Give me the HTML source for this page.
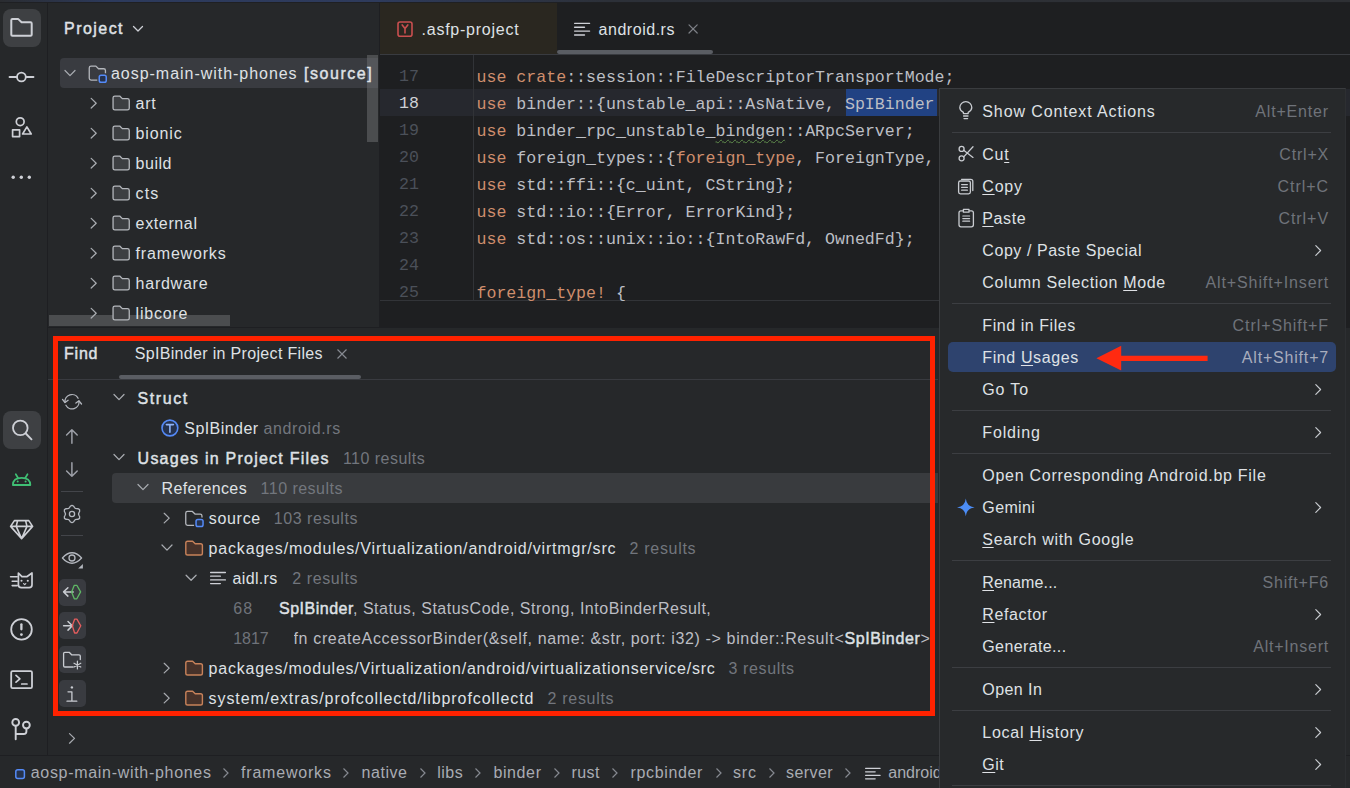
<!DOCTYPE html>
<html><head><meta charset="utf-8"><style>
html,body{margin:0;padding:0;width:1350px;height:788px;overflow:hidden;background:#26282A}
body{position:relative;font-family:'Liberation Sans', sans-serif}
b{font-weight:400;color:#DFE1E5;-webkit-text-stroke:0.45px #DFE1E5}
u{text-decoration-thickness:1px}
</style></head><body><div style="position:absolute;left:0px;top:0px;width:1350px;height:788px;background:#26282A;"></div><div style="position:absolute;left:0px;top:0px;width:1350px;height:2px;background:linear-gradient(90deg,#2a2c30 0%,#2c3a5c 8%,#2e3b5c 28%,#2c3038 45%,#2e3034 100%);"></div><div style="position:absolute;left:0px;top:2px;width:1350px;height:1px;background:#1f2023;"></div><div style="position:absolute;left:47px;top:3px;width:1px;height:752px;background:#1E1F22;"></div><div style="position:absolute;left:380px;top:3px;width:970px;height:324px;background:#1E1F21;"></div><div style="position:absolute;left:379px;top:3px;width:1px;height:324px;background:#1E1F22;"></div><div style="position:absolute;left:48px;top:327px;width:1302px;height:1px;background:#1E1F22;"></div><div style="position:absolute;left:0px;top:755px;width:1350px;height:1px;background:#1E1F22;"></div><div style="position:absolute;left:3px;top:9px;width:38px;height:38px;background:#3E4043;border-radius:8px"></div><div style="position:absolute;left:3px;top:411px;width:38px;height:38px;background:#3E4043;border-radius:8px"></div><svg style="position:absolute;left:132px;top:25px;" width="12" height="8" viewBox="0 0 12 8" fill="none"><path d="M1.5 1.5 L6 6 L10.5 1.5" stroke="#CED0D6" stroke-width="1.3" stroke-linecap="round" stroke-linejoin="round"/></svg><div style="position:absolute;left:60px;top:58px;width:318px;height:30px;background:#393B40;border-radius:4px 0 0 4px"></div><div style="position:absolute;left:367px;top:55px;width:11px;height:87px;background:rgba(112,114,116,0.5);"></div><div style="position:absolute;left:49px;top:315px;width:181px;height:11px;background:rgba(112,114,116,0.5);"></div><div style="position:absolute;left:380px;top:54px;width:970px;height:1px;background:#393B40;"></div><div style="position:absolute;left:380px;top:3px;width:177px;height:51px;background:#2A2720;"></div><div style="position:absolute;left:557px;top:50px;width:156px;height:4px;background:#5A5D63;border-radius:2px"></div><div style="position:absolute;left:380px;top:89px;width:970px;height:27px;background:#26282E;"></div><div style="position:absolute;left:473px;top:55px;width:1px;height:245px;background:#313337;"></div><div style="position:absolute;left:845.5px;top:89px;width:91px;height:27px;background:#214283;"></div><div style="position:absolute;left:380px;top:300px;width:560px;height:1px;background:#323438;"></div><div style="position:absolute;left:399px;top:62.8px;font-family:'Liberation Mono', monospace;font-size:16.6px;line-height:27px;color:#4B5059;white-space:pre">17</div><div style="position:absolute;left:399px;top:89.8px;font-family:'Liberation Mono', monospace;font-size:16.6px;line-height:27px;color:#CFD1D6;white-space:pre">18</div><div style="position:absolute;left:399px;top:116.8px;font-family:'Liberation Mono', monospace;font-size:16.6px;line-height:27px;color:#4B5059;white-space:pre">19</div><div style="position:absolute;left:399px;top:143.8px;font-family:'Liberation Mono', monospace;font-size:16.6px;line-height:27px;color:#4B5059;white-space:pre">20</div><div style="position:absolute;left:399px;top:170.8px;font-family:'Liberation Mono', monospace;font-size:16.6px;line-height:27px;color:#4B5059;white-space:pre">21</div><div style="position:absolute;left:399px;top:197.8px;font-family:'Liberation Mono', monospace;font-size:16.6px;line-height:27px;color:#4B5059;white-space:pre">22</div><div style="position:absolute;left:399px;top:224.8px;font-family:'Liberation Mono', monospace;font-size:16.6px;line-height:27px;color:#4B5059;white-space:pre">23</div><div style="position:absolute;left:399px;top:251.8px;font-family:'Liberation Mono', monospace;font-size:16.6px;line-height:27px;color:#4B5059;white-space:pre">24</div><div style="position:absolute;left:399px;top:278.8px;font-family:'Liberation Mono', monospace;font-size:16.6px;line-height:27px;color:#4B5059;white-space:pre">25</div><div style="position:absolute;left:476.5px;top:63.6px;width:870px;height:239px;overflow:hidden;font-family:'Liberation Mono', monospace;font-size:16.6px;line-height:27px;color:#BCBEC4;white-space:pre"><span style="color:#CF8E6D">use</span> <span style="color:#CF8E6D">crate</span>::session::FileDescriptorTransportMode;<br><span style="color:#CF8E6D">use</span> binder::{unstable_api::AsNative, SpIBinder<br><span style="color:#CF8E6D">use</span> binder_rpc_unstable_<span style="text-decoration:underline wavy #5F8B4B;text-decoration-thickness:1px;text-underline-offset:3px;text-decoration-skip-ink:none">bindgen</span>::ARpcServer;<br><span style="color:#CF8E6D">use</span> foreign_types::{<span style="color:#CF8E6D">foreign_type</span>, ForeignType, ForeignTypeRef};<br><span style="color:#CF8E6D">use</span> std::ffi::{c_uint, CString};<br><span style="color:#CF8E6D">use</span> std::io::{Error, ErrorKind};<br><span style="color:#CF8E6D">use</span> std::os::unix::io::{IntoRawFd, OwnedFd};<br><br><span style="color:#CF8E6D">foreign_type!</span> {</div><svg style="position:absolute;left:336px;top:348px;" width="12" height="12" viewBox="0 0 12 12" fill="none"><path d="M1.5 1.5 L10.5 10.5 M10.5 1.5 L1.5 10.5" stroke="#868A91" stroke-width="1.2"/></svg><div style="position:absolute;left:119px;top:375px;width:242px;height:4px;background:#5A5D63;border-radius:2px"></div><div style="position:absolute;left:48px;top:378.5px;width:890px;height:1px;background:#393B40;"></div><div style="position:absolute;left:112px;top:472.6px;width:826px;height:30px;background:#393B3E;border-radius:4px 0 0 4px"></div><div style="position:absolute;left:59px;top:578.5px;width:27px;height:27px;background:#393B40;border-radius:5px"></div><div style="position:absolute;left:59px;top:612px;width:27px;height:27px;background:#393B40;border-radius:5px"></div><div style="position:absolute;left:59px;top:646px;width:27px;height:27px;background:#393B40;border-radius:5px"></div><div style="position:absolute;left:59px;top:680px;width:27px;height:27px;background:#393B40;border-radius:5px"></div><div style="position:absolute;left:61px;top:491px;width:22px;height:1px;background:#43454A;"></div><div style="position:absolute;left:61px;top:535px;width:22px;height:1px;background:#43454A;"></div><div style="position:absolute;left:53px;top:336px;width:871.5px;height:369.5px;border:5.5px solid #FF2200"></div><svg style="position:absolute;left:222px;top:767px;" width="8" height="12" viewBox="0 0 8 12" fill="none"><path d="M1.5 1.5 L6 6 L1.5 10.5" stroke="#868A91" stroke-width="1.2" fill="none"/></svg><svg style="position:absolute;left:342px;top:767px;" width="8" height="12" viewBox="0 0 8 12" fill="none"><path d="M1.5 1.5 L6 6 L1.5 10.5" stroke="#868A91" stroke-width="1.2" fill="none"/></svg><svg style="position:absolute;left:418.6px;top:767px;" width="8" height="12" viewBox="0 0 8 12" fill="none"><path d="M1.5 1.5 L6 6 L1.5 10.5" stroke="#868A91" stroke-width="1.2" fill="none"/></svg><svg style="position:absolute;left:473.7px;top:767px;" width="8" height="12" viewBox="0 0 8 12" fill="none"><path d="M1.5 1.5 L6 6 L1.5 10.5" stroke="#868A91" stroke-width="1.2" fill="none"/></svg><svg style="position:absolute;left:552.6px;top:767px;" width="8" height="12" viewBox="0 0 8 12" fill="none"><path d="M1.5 1.5 L6 6 L1.5 10.5" stroke="#868A91" stroke-width="1.2" fill="none"/></svg><svg style="position:absolute;left:611.4px;top:767px;" width="8" height="12" viewBox="0 0 8 12" fill="none"><path d="M1.5 1.5 L6 6 L1.5 10.5" stroke="#868A91" stroke-width="1.2" fill="none"/></svg><svg style="position:absolute;left:715px;top:767px;" width="8" height="12" viewBox="0 0 8 12" fill="none"><path d="M1.5 1.5 L6 6 L1.5 10.5" stroke="#868A91" stroke-width="1.2" fill="none"/></svg><svg style="position:absolute;left:767.5px;top:767px;" width="8" height="12" viewBox="0 0 8 12" fill="none"><path d="M1.5 1.5 L6 6 L1.5 10.5" stroke="#868A91" stroke-width="1.2" fill="none"/></svg><svg style="position:absolute;left:843.8px;top:767px;" width="8" height="12" viewBox="0 0 8 12" fill="none"><path d="M1.5 1.5 L6 6 L1.5 10.5" stroke="#868A91" stroke-width="1.2" fill="none"/></svg><div id="t0" style="position:absolute;left:64px;top:13.5px;font-family:'Liberation Sans', sans-serif;font-size:16px;font-weight:400;line-height:30px;color:#DFE1E5;white-space:pre;letter-spacing:1.458px;-webkit-text-stroke:0.45px #DFE1E5">Project</div><div id="t1" style="position:absolute;left:111px;top:58.5px;font-family:'Liberation Sans', sans-serif;font-size:16px;font-weight:400;line-height:30px;color:#DFE1E5;white-space:pre;letter-spacing:0.966px;">aosp-main-with-phones</div><div id="t2" style="position:absolute;left:304px;top:58.5px;font-family:'Liberation Sans', sans-serif;font-size:16px;font-weight:400;line-height:30px;color:#DFE1E5;white-space:pre;letter-spacing:1.535px;-webkit-text-stroke:0.45px #DFE1E5">[source]</div><div id="t3" style="position:absolute;left:135.6px;top:88.5px;font-family:'Liberation Sans', sans-serif;font-size:16px;font-weight:400;line-height:30px;color:#DFE1E5;white-space:pre;letter-spacing:0.776px;">art</div><div id="t4" style="position:absolute;left:135.6px;top:118.5px;font-family:'Liberation Sans', sans-serif;font-size:16px;font-weight:400;line-height:30px;color:#DFE1E5;white-space:pre;letter-spacing:0.865px;">bionic</div><div id="t5" style="position:absolute;left:135.6px;top:148.5px;font-family:'Liberation Sans', sans-serif;font-size:16px;font-weight:400;line-height:30px;color:#DFE1E5;white-space:pre;letter-spacing:0.517px;">build</div><div id="t6" style="position:absolute;left:135.6px;top:178.5px;font-family:'Liberation Sans', sans-serif;font-size:16px;font-weight:400;line-height:30px;color:#DFE1E5;white-space:pre;letter-spacing:1.049px;">cts</div><div id="t7" style="position:absolute;left:135.6px;top:208.5px;font-family:'Liberation Sans', sans-serif;font-size:16px;font-weight:400;line-height:30px;color:#DFE1E5;white-space:pre;letter-spacing:0.635px;">external</div><div id="t8" style="position:absolute;left:135.6px;top:238.5px;font-family:'Liberation Sans', sans-serif;font-size:16px;font-weight:400;line-height:30px;color:#DFE1E5;white-space:pre;letter-spacing:0.821px;">frameworks</div><div id="t9" style="position:absolute;left:135.6px;top:268.5px;font-family:'Liberation Sans', sans-serif;font-size:16px;font-weight:400;line-height:30px;color:#DFE1E5;white-space:pre;letter-spacing:0.750px;">hardware</div><div id="t10" style="position:absolute;left:135.6px;top:298.5px;font-family:'Liberation Sans', sans-serif;font-size:16px;font-weight:400;line-height:30px;color:#DFE1E5;white-space:pre;letter-spacing:0.794px;">libcore</div><div id="t11" style="position:absolute;left:421.5px;top:14.5px;font-family:'Liberation Sans', sans-serif;font-size:16px;font-weight:400;line-height:30px;color:#DFE1E5;white-space:pre;letter-spacing:0.766px;">.asfp-project</div><div id="t12" style="position:absolute;left:598.6px;top:14.5px;font-family:'Liberation Sans', sans-serif;font-size:16px;font-weight:400;line-height:30px;color:#DFE1E5;white-space:pre;letter-spacing:0.524px;">android.rs</div><div id="t13" style="position:absolute;left:64px;top:338.5px;font-family:'Liberation Sans', sans-serif;font-size:16px;font-weight:400;line-height:30px;color:#DFE1E5;white-space:pre;letter-spacing:0.794px;-webkit-text-stroke:0.45px #DFE1E5">Find</div><div id="t14" style="position:absolute;left:134.7px;top:338.5px;font-family:'Liberation Sans', sans-serif;font-size:16px;font-weight:400;line-height:30px;color:#DFE1E5;white-space:pre;letter-spacing:0.329px;">SpIBinder in Project Files</div><div id="t15" style="position:absolute;left:137.6px;top:384px;font-family:'Liberation Sans', sans-serif;font-size:16px;font-weight:400;line-height:30px;color:#DFE1E5;white-space:pre;letter-spacing:1.567px;-webkit-text-stroke:0.45px #DFE1E5">Struct</div><div id="t16" style="position:absolute;left:184.3px;top:414px;font-family:'Liberation Sans', sans-serif;font-size:16px;font-weight:400;line-height:30px;color:#DFE1E5;white-space:pre;letter-spacing:0.437px;">SpIBinder</div><div id="t17" style="position:absolute;left:263.6px;top:414px;font-family:'Liberation Sans', sans-serif;font-size:16px;font-weight:400;line-height:30px;color:#72767D;white-space:pre;letter-spacing:0.604px;">android.rs</div><div id="t18" style="position:absolute;left:137.6px;top:444px;font-family:'Liberation Sans', sans-serif;font-size:16px;font-weight:400;line-height:30px;color:#DFE1E5;white-space:pre;letter-spacing:1.238px;-webkit-text-stroke:0.45px #DFE1E5">Usages in Project Files</div><div id="t19" style="position:absolute;left:342.9px;top:444px;font-family:'Liberation Sans', sans-serif;font-size:16px;font-weight:400;line-height:30px;color:#72767D;white-space:pre;letter-spacing:0.475px;">110 results</div><div id="t20" style="position:absolute;left:161.6px;top:474px;font-family:'Liberation Sans', sans-serif;font-size:16px;font-weight:400;line-height:30px;color:#DFE1E5;white-space:pre;letter-spacing:0.357px;">References</div><div id="t21" style="position:absolute;left:260.6px;top:474px;font-family:'Liberation Sans', sans-serif;font-size:16px;font-weight:400;line-height:30px;color:#72767D;white-space:pre;letter-spacing:0.475px;">110 results</div><div id="t22" style="position:absolute;left:208.7px;top:504px;font-family:'Liberation Sans', sans-serif;font-size:16px;font-weight:400;line-height:30px;color:#DFE1E5;white-space:pre;letter-spacing:0.711px;">source</div><div id="t23" style="position:absolute;left:273.8px;top:504px;font-family:'Liberation Sans', sans-serif;font-size:16px;font-weight:400;line-height:30px;color:#72767D;white-space:pre;letter-spacing:0.539px;">103 results</div><div id="t24" style="position:absolute;left:208.6px;top:534px;font-family:'Liberation Sans', sans-serif;font-size:16px;font-weight:400;line-height:30px;color:#DFE1E5;white-space:pre;letter-spacing:0.818px;">packages/modules/Virtualization/android/virtmgr/src</div><div id="t25" style="position:absolute;left:629.6px;top:534px;font-family:'Liberation Sans', sans-serif;font-size:16px;font-weight:400;line-height:30px;color:#72767D;white-space:pre;letter-spacing:0.681px;">2 results</div><div id="t26" style="position:absolute;left:232.5px;top:564px;font-family:'Liberation Sans', sans-serif;font-size:16px;font-weight:400;line-height:30px;color:#DFE1E5;white-space:pre;letter-spacing:0.345px;">aidl.rs</div><div id="t27" style="position:absolute;left:292.3px;top:564px;font-family:'Liberation Sans', sans-serif;font-size:16px;font-weight:400;line-height:30px;color:#72767D;white-space:pre;letter-spacing:0.581px;">2 results</div><div id="t28" style="position:absolute;left:233.2px;top:594px;font-family:'Liberation Sans', sans-serif;font-size:16px;font-weight:400;line-height:30px;color:#6F737A;white-space:pre;letter-spacing:1.252px;">68</div><div id="t29" style="position:absolute;left:279px;top:594px;font-family:'Liberation Sans', sans-serif;font-size:16px;font-weight:400;line-height:30px;color:#BCBEC4;white-space:pre;letter-spacing:0.509px;"><b>SpIBinder</b>, Status, StatusCode, Strong, IntoBinderResult,</div><div id="t30" style="position:absolute;left:233.2px;top:624px;font-family:'Liberation Sans', sans-serif;font-size:16px;font-weight:400;line-height:30px;color:#6F737A;white-space:pre;letter-spacing:-0.023px;">1817</div><div id="t31" style="position:absolute;left:293.5px;top:624px;font-family:'Liberation Sans', sans-serif;font-size:16px;font-weight:400;line-height:30px;color:#BCBEC4;white-space:pre;letter-spacing:0.648px;width:636px;overflow:hidden">fn createAccessorBinder(&amp;self, name: &amp;str, port: i32) -&gt; binder::Result&lt;<b>SpIBinder</b>&gt;</div><div id="t32" style="position:absolute;left:208.6px;top:654px;font-family:'Liberation Sans', sans-serif;font-size:16px;font-weight:400;line-height:30px;color:#DFE1E5;white-space:pre;letter-spacing:0.772px;">packages/modules/Virtualization/android/virtualizationservice/src</div><div id="t33" style="position:absolute;left:728.5px;top:654px;font-family:'Liberation Sans', sans-serif;font-size:16px;font-weight:400;line-height:30px;color:#72767D;white-space:pre;letter-spacing:0.626px;">3 results</div><div id="t34" style="position:absolute;left:208.6px;top:684px;font-family:'Liberation Sans', sans-serif;font-size:16px;font-weight:400;line-height:30px;color:#DFE1E5;white-space:pre;letter-spacing:0.918px;">system/extras/profcollectd/libprofcollectd</div><div id="t35" style="position:absolute;left:547.6px;top:684px;font-family:'Liberation Sans', sans-serif;font-size:16px;font-weight:400;line-height:30px;color:#72767D;white-space:pre;letter-spacing:0.681px;">2 results</div><div id="t36" style="position:absolute;left:30.7px;top:757.75px;font-family:'Liberation Sans', sans-serif;font-size:16px;font-weight:400;line-height:30px;color:#A9ACB3;white-space:pre;letter-spacing:0.699px;">aosp-main-with-phones</div><div id="t37" style="position:absolute;left:241px;top:757.75px;font-family:'Liberation Sans', sans-serif;font-size:16px;font-weight:400;line-height:30px;color:#A9ACB3;white-space:pre;letter-spacing:0.801px;">frameworks</div><div id="t38" style="position:absolute;left:361.6px;top:757.75px;font-family:'Liberation Sans', sans-serif;font-size:16px;font-weight:400;line-height:30px;color:#A9ACB3;white-space:pre;letter-spacing:0.516px;">native</div><div id="t39" style="position:absolute;left:437.3px;top:757.75px;font-family:'Liberation Sans', sans-serif;font-size:16px;font-weight:400;line-height:30px;color:#A9ACB3;white-space:pre;letter-spacing:0.471px;">libs</div><div id="t40" style="position:absolute;left:493.4px;top:757.75px;font-family:'Liberation Sans', sans-serif;font-size:16px;font-weight:400;line-height:30px;color:#A9ACB3;white-space:pre;letter-spacing:0.619px;">binder</div><div id="t41" style="position:absolute;left:571.4px;top:757.75px;font-family:'Liberation Sans', sans-serif;font-size:16px;font-weight:400;line-height:30px;color:#A9ACB3;white-space:pre;letter-spacing:0.482px;">rust</div><div id="t42" style="position:absolute;left:630.6px;top:757.75px;font-family:'Liberation Sans', sans-serif;font-size:16px;font-weight:400;line-height:30px;color:#A9ACB3;white-space:pre;letter-spacing:0.633px;">rpcbinder</div><div id="t43" style="position:absolute;left:733px;top:757.75px;font-family:'Liberation Sans', sans-serif;font-size:16px;font-weight:400;line-height:30px;color:#A9ACB3;white-space:pre;letter-spacing:0.824px;">src</div><div id="t44" style="position:absolute;left:786px;top:757.75px;font-family:'Liberation Sans', sans-serif;font-size:16px;font-weight:400;line-height:30px;color:#A9ACB3;white-space:pre;letter-spacing:0.424px;">server</div><div id="t45" style="position:absolute;left:888.3px;top:757.75px;font-family:'Liberation Sans', sans-serif;font-size:16px;font-weight:400;line-height:30px;color:#A9ACB3;white-space:pre;letter-spacing:0.000px;">android.rs</div><div style="position:absolute;left:938.5px;top:87.5px;width:405px;height:720px;background:#27292B;border:1px solid #3A3C3F;border-right-color:#2D2F32;border-radius:0"></div><div style="position:absolute;left:951.5px;top:132.0px;width:379.5px;height:1px;background:#3C3E42;"></div><svg style="position:absolute;left:1313.5px;top:243.7px;" width="9" height="13" viewBox="0 0 9 13" fill="none"><path d="M1.8 1.6 L6.6 6.5 L1.8 11.4" stroke="#C9CCD1" stroke-width="1.15" fill="none" stroke-linecap="round" stroke-linejoin="round"/></svg><div style="position:absolute;left:951.5px;top:303.0px;width:379.5px;height:1px;background:#3C3E42;"></div><div style="position:absolute;left:948px;top:342.0px;width:387.5px;height:30px;background:#2E436E;border-radius:5px"></div><svg style="position:absolute;left:1313.5px;top:382.7px;" width="9" height="13" viewBox="0 0 9 13" fill="none"><path d="M1.8 1.6 L6.6 6.5 L1.8 11.4" stroke="#C9CCD1" stroke-width="1.15" fill="none" stroke-linecap="round" stroke-linejoin="round"/></svg><div style="position:absolute;left:951.5px;top:410.0px;width:379.5px;height:1px;background:#3C3E42;"></div><svg style="position:absolute;left:1313.5px;top:425.7px;" width="9" height="13" viewBox="0 0 9 13" fill="none"><path d="M1.8 1.6 L6.6 6.5 L1.8 11.4" stroke="#C9CCD1" stroke-width="1.15" fill="none" stroke-linecap="round" stroke-linejoin="round"/></svg><div style="position:absolute;left:951.5px;top:453.0px;width:379.5px;height:1px;background:#3C3E42;"></div><svg style="position:absolute;left:1313.5px;top:500.7px;" width="9" height="13" viewBox="0 0 9 13" fill="none"><path d="M1.8 1.6 L6.6 6.5 L1.8 11.4" stroke="#C9CCD1" stroke-width="1.15" fill="none" stroke-linecap="round" stroke-linejoin="round"/></svg><div style="position:absolute;left:951.5px;top:560.0px;width:379.5px;height:1px;background:#3C3E42;"></div><svg style="position:absolute;left:1313.5px;top:607.7px;" width="9" height="13" viewBox="0 0 9 13" fill="none"><path d="M1.8 1.6 L6.6 6.5 L1.8 11.4" stroke="#C9CCD1" stroke-width="1.15" fill="none" stroke-linecap="round" stroke-linejoin="round"/></svg><div style="position:absolute;left:951.5px;top:667.0px;width:379.5px;height:1px;background:#3C3E42;"></div><svg style="position:absolute;left:1313.5px;top:682.7px;" width="9" height="13" viewBox="0 0 9 13" fill="none"><path d="M1.8 1.6 L6.6 6.5 L1.8 11.4" stroke="#C9CCD1" stroke-width="1.15" fill="none" stroke-linecap="round" stroke-linejoin="round"/></svg><div style="position:absolute;left:951.5px;top:710.0px;width:379.5px;height:1px;background:#3C3E42;"></div><svg style="position:absolute;left:1313.5px;top:725.7px;" width="9" height="13" viewBox="0 0 9 13" fill="none"><path d="M1.8 1.6 L6.6 6.5 L1.8 11.4" stroke="#C9CCD1" stroke-width="1.15" fill="none" stroke-linecap="round" stroke-linejoin="round"/></svg><svg style="position:absolute;left:1313.5px;top:757.7px;" width="9" height="13" viewBox="0 0 9 13" fill="none"><path d="M1.8 1.6 L6.6 6.5 L1.8 11.4" stroke="#C9CCD1" stroke-width="1.15" fill="none" stroke-linecap="round" stroke-linejoin="round"/></svg><div style="position:absolute;left:951.5px;top:785.0px;width:379.5px;height:1px;background:#3C3E42;"></div><svg style="position:absolute;left:0;top:0" width="1350" height="788" viewBox="0 0 1350 788" fill="none"><path d="M11.3 20.2 Q11.3 19.1 12.4 19.1 L18.3 19.1 L21.6 22.3 L30.6 22.3 Q31.7 22.3 31.7 23.4 L31.7 34.7 Q31.7 35.8 30.6 35.8 L12.4 35.8 Q11.3 35.8 11.3 34.7 Z" stroke="#CED0D6" stroke-width="2" fill="none" stroke-linecap="round" stroke-linejoin="round" /><path d="M9.5 77 L16.8 77 M26 77 L33.5 77" stroke="#CED0D6" stroke-width="1.8" fill="none" stroke-linecap="round" stroke-linejoin="round" /><circle cx="21.4" cy="77" r="4.4" stroke="#CED0D6" stroke-width="1.8" fill="none"/><circle cx="20.2" cy="121.7" r="3.9" stroke="#CED0D6" stroke-width="1.7" fill="none"/><path d="M12.6 129.8 L19.6 129.8 L19.6 136.6 L12.6 136.6 Z" stroke="#CED0D6" stroke-width="1.7" fill="none" stroke-linecap="round" stroke-linejoin="round" /><path d="M26.9 126.9 L31.2 134 L22.6 134 Z" stroke="#CED0D6" stroke-width="1.7" fill="none" stroke-linecap="round" stroke-linejoin="round" /><circle cx="13.2" cy="177.3" r="1.7" fill="#CED0D6"/><circle cx="21.3" cy="177.3" r="1.7" fill="#CED0D6"/><circle cx="29.3" cy="177.3" r="1.7" fill="#CED0D6"/><circle cx="20.3" cy="427.9" r="7.3" stroke="#CED0D6" stroke-width="1.8" fill="none"/><path d="M25.8 433.5 L31.5 439.3" stroke="#CED0D6" stroke-width="1.9" fill="none" stroke-linecap="round" stroke-linejoin="round" /><path d="M12.9 485 Q12.9 477.8 21.7 477.8 Q30.3 477.8 30.3 485 Z" stroke="#3FBF74" stroke-width="1.8" fill="none" stroke-linecap="round" stroke-linejoin="round" /><path d="M15.8 474.2 L18.2 478.2 M27.5 474.2 L25.1 478.2" stroke="#3FBF74" stroke-width="1.7" fill="none" stroke-linecap="round" stroke-linejoin="round" /><circle cx="17.7" cy="481.6" r="1" fill="#3FBF74"/><circle cx="25.6" cy="481.6" r="1" fill="#3FBF74"/><path d="M14.4 520.6 L28.8 520.6 L32.6 526.4 L21.6 538.6 L10.6 526.4 Z M10.6 526.4 L32.6 526.4 M17.6 520.6 L16.2 526.4 L21.6 538.6 L27.0 526.4 L25.6 520.6" stroke="#CED0D6" stroke-width="1.6" fill="none" stroke-linecap="round" stroke-linejoin="round" /><path d="M18.4 584.8 L18.4 573 L21.9 576.7 L26.8 576.7 L32.0 573 L32.0 584.8 Q32.0 587.7 29.1 587.7 L21.3 587.7 Q18.4 587.7 18.4 584.8 Z" stroke="#CED0D6" stroke-width="1.7" fill="none" stroke-linecap="round" stroke-linejoin="round" /><path d="M10.6 576.7 L17.2 576.7 M12.2 581.2 L17.2 581.2 M12.2 585.6 L17.2 585.6" stroke="#CED0D6" stroke-width="1.6" fill="none" stroke-linecap="round" stroke-linejoin="round" /><circle cx="21.5" cy="580.8" r="1.05" fill="#CED0D6"/><circle cx="27.8" cy="580.8" r="1.05" fill="#CED0D6"/><path d="M23.6 583.6 L24.7 584.6 L25.8 583.6" stroke="#CED0D6" stroke-width="1.2" fill="none" stroke-linecap="round" stroke-linejoin="round" /><circle cx="21.5" cy="629.4" r="10.3" stroke="#CED0D6" stroke-width="1.8" fill="none"/><path d="M21.4 624.3 L21.4 629.3" stroke="#CED0D6" stroke-width="2.3" fill="none" stroke-linecap="round" stroke-linejoin="round" /><circle cx="21.4" cy="634.6" r="1.4" fill="#CED0D6"/><path d="M12.6 671.2 L30.6 671.2 Q32 671.2 32 672.6 L32 686.7 Q32 688.1 30.6 688.1 L12.6 688.1 Q11.2 688.1 11.2 686.7 L11.2 672.6 Q11.2 671.2 12.6 671.2 Z" stroke="#CED0D6" stroke-width="1.8" fill="none" stroke-linecap="round" stroke-linejoin="round" /><path d="M16 675.4 L19.9 678.8 L16 682.2 M21.7 684 L27 684" stroke="#CED0D6" stroke-width="1.7" fill="none" stroke-linecap="round" stroke-linejoin="round" /><circle cx="15.7" cy="722.4" r="3.4" stroke="#CED0D6" stroke-width="1.9" fill="none"/><circle cx="26.4" cy="725.1" r="3.4" stroke="#CED0D6" stroke-width="1.9" fill="none"/><path d="M15.7 725.9 L15.7 739.3 M26.4 728.6 L26.4 731.5 Q26.4 734 23.7 734 L15.9 734" stroke="#CED0D6" stroke-width="1.9" fill="none" stroke-linecap="round" stroke-linejoin="round" /></svg><svg style="position:absolute;left:0;top:0" width="1350" height="788" viewBox="0 0 1350 788" fill="none"><path d="M65 70.5 L70 75.6 L75 70.5" stroke="#A8ABB0" stroke-width="1.25" fill="none" stroke-linecap="round" stroke-linejoin="round" /><path d="M89.25 67.95 Q89.25 66.15 91.05 66.15 L95.9 66.15 L98.5 68.75 L103.64999999999999 68.75 Q105.44999999999999 68.75 105.44999999999999 70.55000000000001 L105.44999999999999 78.25 Q105.44999999999999 80.05 103.64999999999999 80.05 L91.05 80.05 Q89.25 80.05 89.25 78.25 Z" stroke="#B4B7BC" stroke-width="1.3" fill="none" stroke-linejoin="round"/><rect x="97.3" y="73.3" width="11" height="11" rx="3" fill="#393B3E"/><rect x="99.25" y="75.25" width="7" height="7" rx="1.8" stroke="#548AF7" stroke-width="1.5" fill="#25324D"/><path d="M91.2 98.4 L96.2 103.2 L91.2 108.0" stroke="#A8ABB0" stroke-width="1.25" fill="none" stroke-linecap="round" stroke-linejoin="round" /><path d="M113.05000000000001 97.85000000000001 Q113.05000000000001 96.05000000000001 114.85000000000001 96.05000000000001 L119.70000000000002 96.05000000000001 L122.30000000000001 98.65 L127.45 98.65 Q129.25 98.65 129.25 100.45000000000002 L129.25 108.15 Q129.25 109.95 127.45 109.95 L114.85000000000001 109.95 Q113.05000000000001 109.95 113.05000000000001 108.15 Z" stroke="#B4B7BC" stroke-width="1.3" fill="#3D3F42" stroke-linejoin="round"/><path d="M91.2 128.4 L96.2 133.20000000000002 L91.2 138.0" stroke="#A8ABB0" stroke-width="1.25" fill="none" stroke-linecap="round" stroke-linejoin="round" /><path d="M113.05000000000001 127.85000000000001 Q113.05000000000001 126.05000000000001 114.85000000000001 126.05000000000001 L119.70000000000002 126.05000000000001 L122.30000000000001 128.65 L127.45 128.65 Q129.25 128.65 129.25 130.45000000000002 L129.25 138.14999999999998 Q129.25 139.95 127.45 139.95 L114.85000000000001 139.95 Q113.05000000000001 139.95 113.05000000000001 138.14999999999998 Z" stroke="#B4B7BC" stroke-width="1.3" fill="#3D3F42" stroke-linejoin="round"/><path d="M91.2 158.4 L96.2 163.20000000000002 L91.2 168.0" stroke="#A8ABB0" stroke-width="1.25" fill="none" stroke-linecap="round" stroke-linejoin="round" /><path d="M113.05000000000001 157.85000000000002 Q113.05000000000001 156.05 114.85000000000001 156.05 L119.70000000000002 156.05 L122.30000000000001 158.65 L127.45 158.65 Q129.25 158.65 129.25 160.45000000000002 L129.25 168.14999999999998 Q129.25 169.95 127.45 169.95 L114.85000000000001 169.95 Q113.05000000000001 169.95 113.05000000000001 168.14999999999998 Z" stroke="#B4B7BC" stroke-width="1.3" fill="#3D3F42" stroke-linejoin="round"/><path d="M91.2 188.4 L96.2 193.20000000000002 L91.2 198.0" stroke="#A8ABB0" stroke-width="1.25" fill="none" stroke-linecap="round" stroke-linejoin="round" /><path d="M113.05000000000001 187.85000000000002 Q113.05000000000001 186.05 114.85000000000001 186.05 L119.70000000000002 186.05 L122.30000000000001 188.65 L127.45 188.65 Q129.25 188.65 129.25 190.45000000000002 L129.25 198.14999999999998 Q129.25 199.95 127.45 199.95 L114.85000000000001 199.95 Q113.05000000000001 199.95 113.05000000000001 198.14999999999998 Z" stroke="#B4B7BC" stroke-width="1.3" fill="#3D3F42" stroke-linejoin="round"/><path d="M91.2 218.4 L96.2 223.20000000000002 L91.2 228.0" stroke="#A8ABB0" stroke-width="1.25" fill="none" stroke-linecap="round" stroke-linejoin="round" /><path d="M113.05000000000001 217.85000000000002 Q113.05000000000001 216.05 114.85000000000001 216.05 L119.70000000000002 216.05 L122.30000000000001 218.65 L127.45 218.65 Q129.25 218.65 129.25 220.45000000000002 L129.25 228.14999999999998 Q129.25 229.95 127.45 229.95 L114.85000000000001 229.95 Q113.05000000000001 229.95 113.05000000000001 228.14999999999998 Z" stroke="#B4B7BC" stroke-width="1.3" fill="#3D3F42" stroke-linejoin="round"/><path d="M91.2 248.4 L96.2 253.20000000000002 L91.2 258.0" stroke="#A8ABB0" stroke-width="1.25" fill="none" stroke-linecap="round" stroke-linejoin="round" /><path d="M113.05000000000001 247.85000000000002 Q113.05000000000001 246.05 114.85000000000001 246.05 L119.70000000000002 246.05 L122.30000000000001 248.65 L127.45 248.65 Q129.25 248.65 129.25 250.45000000000002 L129.25 258.15000000000003 Q129.25 259.95000000000005 127.45 259.95000000000005 L114.85000000000001 259.95000000000005 Q113.05000000000001 259.95000000000005 113.05000000000001 258.15000000000003 Z" stroke="#B4B7BC" stroke-width="1.3" fill="#3D3F42" stroke-linejoin="round"/><path d="M91.2 278.4 L96.2 283.2 L91.2 288.0" stroke="#A8ABB0" stroke-width="1.25" fill="none" stroke-linecap="round" stroke-linejoin="round" /><path d="M113.05000000000001 277.84999999999997 Q113.05000000000001 276.04999999999995 114.85000000000001 276.04999999999995 L119.70000000000002 276.04999999999995 L122.30000000000001 278.65 L127.45 278.65 Q129.25 278.65 129.25 280.44999999999993 L129.25 288.15 Q129.25 289.95 127.45 289.95 L114.85000000000001 289.95 Q113.05000000000001 289.95 113.05000000000001 288.15 Z" stroke="#B4B7BC" stroke-width="1.3" fill="#3D3F42" stroke-linejoin="round"/><path d="M91.2 308.4 L96.2 313.2 L91.2 318.0" stroke="#A8ABB0" stroke-width="1.25" fill="none" stroke-linecap="round" stroke-linejoin="round" /><path d="M113.05000000000001 307.84999999999997 Q113.05000000000001 306.04999999999995 114.85000000000001 306.04999999999995 L119.70000000000002 306.04999999999995 L122.30000000000001 308.65 L127.45 308.65 Q129.25 308.65 129.25 310.44999999999993 L129.25 318.15 Q129.25 319.95 127.45 319.95 L114.85000000000001 319.95 Q113.05000000000001 319.95 113.05000000000001 318.15 Z" stroke="#B4B7BC" stroke-width="1.3" fill="#3D3F42" stroke-linejoin="round"/><rect x="398" y="22" width="14" height="14.2" rx="2" stroke="#C94F4F" stroke-width="1.6" fill="none"/><path d="M402.2 24.9 L405 28.6 L407.8 24.9 M405 28.6 L405 33" stroke="#C94F4F" stroke-width="1.6" fill="none" stroke-linecap="round" stroke-linejoin="round" /><path d="M574.6 23.3 L589.6 23.3 M574.6 27.2 L584.5 27.2 M574.6 31.1 L589.6 31.1 M574.6 35.0 L584.5 35.0" stroke="#CED0D6" stroke-width="1.35" fill="none" stroke-linecap="round" stroke-linejoin="round" /><path d="M689 24.8 L697.2 33 M697.2 24.8 L689 33" stroke="#7E8187" stroke-width="1.2" fill="none" stroke-linecap="round" stroke-linejoin="round" /><path d="M114 394.5 L119 399.6 L124 394.5" stroke="#A8ABB0" stroke-width="1.25" fill="none" stroke-linecap="round" stroke-linejoin="round" /><circle cx="169.9" cy="428" r="7.9" stroke="#548AF7" stroke-width="1.6" fill="#25324D"/><path d="M166.4 424.6 L173.4 424.6 M169.9 424.6 L169.9 432.3" stroke="#8FB3F7" stroke-width="1.6" fill="none" stroke-linecap="round" stroke-linejoin="round" /><path d="M114 454.5 L119 459.6 L124 454.5" stroke="#A8ABB0" stroke-width="1.25" fill="none" stroke-linecap="round" stroke-linejoin="round" /><path d="M138 484.5 L143 489.6 L148 484.5" stroke="#A8ABB0" stroke-width="1.25" fill="none" stroke-linecap="round" stroke-linejoin="round" /><path d="M164.2 513.3 L169.2 518.0999999999999 L164.2 522.9" stroke="#A8ABB0" stroke-width="1.25" fill="none" stroke-linecap="round" stroke-linejoin="round" /><path d="M185.75 513.25 Q185.75 511.45 187.55 511.45 L192.4 511.45 L195.0 514.05 L200.14999999999998 514.05 Q201.95 514.05 201.95 515.85 L201.95 523.5500000000001 Q201.95 525.35 200.14999999999998 525.35 L187.55 525.35 Q185.75 525.35 185.75 523.5500000000001 Z" stroke="#B4B7BC" stroke-width="1.3" fill="none" stroke-linejoin="round"/><rect x="194.10000000000002" y="517.5999999999999" width="11" height="11" rx="3" fill="#26282A"/><rect x="196.05" y="519.55" width="7" height="7" rx="1.8" stroke="#548AF7" stroke-width="1.5" fill="#25324D"/><path d="M162 545 L167 550.1 L172 545" stroke="#A8ABB0" stroke-width="1.25" fill="none" stroke-linecap="round" stroke-linejoin="round" /><path d="M185.79999999999998 543.0 Q185.79999999999998 541.2 187.6 541.2 L192.64 541.2 L195.23999999999998 543.8000000000001 L200.6 543.8000000000001 Q202.4 543.8000000000001 202.4 545.6 L202.4 553.2 Q202.4 555.0 200.6 555.0 L187.6 555.0 Q185.79999999999998 555.0 185.79999999999998 553.2 Z" stroke="#C7825A" stroke-width="1.4" fill="#46322A" stroke-linejoin="round"/><path d="M186.1 575.2 L191.1 580.3000000000001 L196.1 575.2" stroke="#A8ABB0" stroke-width="1.25" fill="none" stroke-linecap="round" stroke-linejoin="round" /><path d="M210.6 572.5 L225.4 572.5 M210.6 576.2 L220.368 576.2 M210.6 579.9 L225.4 579.9 M210.6 583.6 L220.368 583.6" stroke="#CED0D6" stroke-width="1.3" fill="none" stroke-linecap="round" stroke-linejoin="round" /><path d="M164.2 663.3 L169.2 668.0999999999999 L164.2 672.9" stroke="#A8ABB0" stroke-width="1.25" fill="none" stroke-linecap="round" stroke-linejoin="round" /><path d="M185.79999999999998 663.0 Q185.79999999999998 661.2 187.6 661.2 L192.64 661.2 L195.23999999999998 663.8000000000001 L200.6 663.8000000000001 Q202.4 663.8000000000001 202.4 665.6 L202.4 673.2 Q202.4 675.0 200.6 675.0 L187.6 675.0 Q185.79999999999998 675.0 185.79999999999998 673.2 Z" stroke="#C7825A" stroke-width="1.4" fill="#46322A" stroke-linejoin="round"/><path d="M164.2 693.3 L169.2 698.0999999999999 L164.2 702.9" stroke="#A8ABB0" stroke-width="1.25" fill="none" stroke-linecap="round" stroke-linejoin="round" /><path d="M185.79999999999998 693.0 Q185.79999999999998 691.2 187.6 691.2 L192.64 691.2 L195.23999999999998 693.8000000000001 L200.6 693.8000000000001 Q202.4 693.8000000000001 202.4 695.6 L202.4 703.2 Q202.4 705.0 200.6 705.0 L187.6 705.0 Q185.79999999999998 705.0 185.79999999999998 703.2 Z" stroke="#C7825A" stroke-width="1.4" fill="#46322A" stroke-linejoin="round"/><path d="M65.0 402.3 A7 7 0 0 1 78.1 398.2 M79.0 401.1 A7 7 0 0 1 65.9 405.2" stroke="#B4B8BF" stroke-width="1.3" fill="none" stroke-linecap="round" stroke-linejoin="round" /><path d="M62.5 399.4 L65.0 402.6 L68.1 400.3 M81.5 404.0 L79.0 400.8 L75.9 403.1" stroke="#B4B8BF" stroke-width="1.3" fill="none" stroke-linecap="round" stroke-linejoin="round" /><path d="M71.9 429.8 L71.9 443.2 M66.6 435 L71.9 429.8 L77.2 435" stroke="#9DA0A8" stroke-width="1.5" fill="none" stroke-linecap="round" stroke-linejoin="round" /><path d="M71.9 462.8 L71.9 476.2 M66.6 471 L71.9 476.2 L77.2 471" stroke="#9DA0A8" stroke-width="1.5" fill="none" stroke-linecap="round" stroke-linejoin="round" /><path d="M72.00 505.30 L73.42 505.97 L74.41 507.38 L75.25 508.37 L76.53 508.60 L78.24 508.76 L79.53 509.65 L79.66 511.21 L78.94 512.78 L78.50 514.00 L78.94 515.22 L79.66 516.79 L79.53 518.35 L78.24 519.24 L76.53 519.40 L75.25 519.63 L74.41 520.62 L73.42 522.03 L72.00 522.70 L70.58 522.03 L69.59 520.62 L68.75 519.63 L67.47 519.40 L65.76 519.24 L64.47 518.35 L64.34 516.79 L65.06 515.22 L65.50 514.00 L65.06 512.78 L64.34 511.21 L64.47 509.65 L65.76 508.76 L67.47 508.60 L68.75 508.37 L69.59 507.38 L70.58 505.97 Z" stroke="#B4B8BF" stroke-width="1.3" fill="none" stroke-linejoin="round"/><circle cx="72" cy="514" r="2.6" stroke="#B4B8BF" stroke-width="1.3" fill="none"/><path d="M62.4 558 Q72 547.5 81.6 558 Q72 568.5 62.4 558 Z" stroke="#B4B8BF" stroke-width="1.3" fill="none" stroke-linecap="round" stroke-linejoin="round" /><circle cx="72" cy="558" r="3" stroke="#B4B8BF" stroke-width="1.3" fill="none"/><path d="M82.9 564 L82.9 568.6 L78.2 568.6 Z" fill="#B4B8BF"/><path d="M63.6 591.9 L73.2 591.9 M67.9 587.7 L63.6 591.9 L67.9 596.1" stroke="#C9CCD1" stroke-width="1.5" fill="none" stroke-linecap="round" stroke-linejoin="round" /><path d="M71.6 591.9 L74.3 585.3 L76.8 585.3 L80.6 591.9 L76.8 598.8 L74.3 598.8 Z" stroke="#5FB865" stroke-width="1.3" fill="none" stroke-linecap="round" stroke-linejoin="round" /><path d="M63.6 625.8 L72.6 625.8 M68 621.5 L72.3 625.8 L68 630.1" stroke="#C9CCD1" stroke-width="1.5" fill="none" stroke-linecap="round" stroke-linejoin="round" /><path d="M72.3 625.8 L74.6 619.2 L76.9 619.2 L80.8 625.8 L76.9 633 L74.6 633 Z" stroke="#E55D5D" stroke-width="1.3" fill="none" stroke-linecap="round" stroke-linejoin="round" /><path d="M73 667 L64.8 667 Q63.6 667 63.6 665.8 L63.6 653.5 Q63.6 652.3 64.8 652.3 L69.2 652.3 L71.6 654.8 L79 654.8 Q80.3 654.8 80.3 656 L80.3 659.5" stroke="#C9CCD1" stroke-width="1.3" fill="none" stroke-linecap="round" stroke-linejoin="round" /><path d="M77.4 661.2 L77.4 669 M74 663.2 L80.8 667 M80.8 663.2 L74 667" stroke="#C9CCD1" stroke-width="1.2" fill="none" stroke-linecap="round" stroke-linejoin="round" /><circle cx="71.9" cy="687.4" r="1.2" fill="#C9CCD1"/><path d="M68 691.8 L71.9 691.8 L71.9 701 M67 701.2 L76.8 701.2" stroke="#C9CCD1" stroke-width="1.3" fill="none" stroke-linecap="round" stroke-linejoin="round" /><path d="M69.5 733.6 L74.5 738.4 L69.5 743.2" stroke="#A8ABB0" stroke-width="1.25" fill="none" stroke-linecap="round" stroke-linejoin="round" /></svg><svg style="position:absolute;left:0;top:0" width="1350" height="788" viewBox="0 0 1350 788" fill="none"><rect x="15.8" y="769.8" width="8.6" height="8.6" rx="2" stroke="#548AF7" stroke-width="1.5" fill="#25324D"/><path d="M865.6 768.3 L880.1 768.3 M865.6 771.8 L875.1700000000001 771.8 M865.6 775.3 L880.1 775.3 M865.6 778.8 L875.1700000000001 778.8" stroke="#CED0D6" stroke-width="1.3" fill="none" stroke-linecap="round" stroke-linejoin="round" /></svg><svg style="position:absolute;left:0;top:0" width="1350" height="788" viewBox="0 0 1350 788" fill="none"><path d="M963.4 113.6 L963.4 112.4 Q959.8 110.3 959.8 107.6 A6 6 0 0 1 971.8 107.6 Q971.8 110.3 968.2 112.4 L968.2 113.6 Z" stroke="#C9CCD1" stroke-width="1.3" fill="none" stroke-linecap="round" stroke-linejoin="round" /><path d="M963.6 116 L968 116 M964 118.6 L967.6 118.6" stroke="#C9CCD1" stroke-width="1.3" fill="none" stroke-linecap="round" stroke-linejoin="round" /><circle cx="961.6" cy="148.9" r="2.5" stroke="#C9CCD1" stroke-width="1.3" fill="none"/><circle cx="961.6" cy="158.3" r="2.5" stroke="#C9CCD1" stroke-width="1.3" fill="none"/><path d="M963.7 150.3 L973 157.4 M963.7 156.9 L973 146.8" stroke="#C9CCD1" stroke-width="1.3" fill="none" stroke-linecap="round" stroke-linejoin="round" /><path d="M961.5 179.3 L970.8 179.3 Q972.8 179.3 972.8 181.3 L972.8 190.5" stroke="#C9CCD1" stroke-width="1.3" fill="none" stroke-linecap="round" stroke-linejoin="round" /><path d="M960.4 181 L968.6 181 Q970.4 181 970.4 182.8 L970.4 192 Q970.4 193.8 968.6 193.8 L960.4 193.8 Q958.6 193.8 958.6 192 L958.6 182.8 Q958.6 181 960.4 181 Z" stroke="#C9CCD1" stroke-width="1.3" fill="none" stroke-linecap="round" stroke-linejoin="round" /><path d="M961.6 184.6 L967.4 184.6 M961.6 187.4 L967.4 187.4 M961.6 190.2 L967.4 190.2" stroke="#C9CCD1" stroke-width="1.2" fill="none" stroke-linecap="round" stroke-linejoin="round" /><path d="M962.9 210.8 L961 210.8 Q959 210.8 959 212.8 L959 224.8 Q959 226.8 961 226.8 L971.4 226.8 Q973.4 226.8 973.4 224.8 L973.4 212.8 Q973.4 210.8 971.4 210.8 L969.5 210.8" stroke="#C9CCD1" stroke-width="1.3" fill="none" stroke-linecap="round" stroke-linejoin="round" /><path d="M963.4 209.4 L969 209.4 L969 212.2 L963.4 212.2 Z" stroke="#C9CCD1" stroke-width="1.3" fill="none" stroke-linecap="round" stroke-linejoin="round" /><path d="M962.8 216 L969.6 216 M962.8 218.6 L969.6 218.6 M962.8 221.2 L969.6 221.2" stroke="#C9CCD1" stroke-width="1.2" fill="none" stroke-linecap="round" stroke-linejoin="round" /><path d="M965.8 498.6 Q966.6 506.6 974.6 507.4 Q966.6 508.2 965.8 516.2 Q965 508.2 957 507.4 Q965 506.6 965.8 498.6 Z" fill="#4C8DF6"/><path d="M1096.4 358.3 L1121.2 345.8 L1121.2 355.8 L1207.6 355.8 L1207.6 361 L1121.2 361 L1121.2 370.6 Z" fill="#FF2A10"/></svg><div id="t46" style="position:absolute;left:982.3px;top:96.5px;font-family:'Liberation Sans', sans-serif;font-size:16px;font-weight:400;line-height:30px;color:#DFE1E5;white-space:pre;letter-spacing:0.888px;">Show Context Actions</div><div id="t47" style="position:absolute;left:1255.3px;top:96.5px;font-family:'Liberation Sans', sans-serif;font-size:16px;font-weight:400;line-height:30px;color:#6F737A;white-space:pre;letter-spacing:0.826px;">Alt+Enter</div><div id="t48" style="position:absolute;left:982.3px;top:139.5px;font-family:'Liberation Sans', sans-serif;font-size:16px;font-weight:400;line-height:30px;color:#DFE1E5;white-space:pre;letter-spacing:0.698px;">Cu<u style="text-underline-offset:2px">t</u></div><div id="t49" style="position:absolute;left:1279.3px;top:139.5px;font-family:'Liberation Sans', sans-serif;font-size:16px;font-weight:400;line-height:30px;color:#6F737A;white-space:pre;letter-spacing:0.799px;">Ctrl+X</div><div id="t50" style="position:absolute;left:982.3px;top:171.5px;font-family:'Liberation Sans', sans-serif;font-size:16px;font-weight:400;line-height:30px;color:#DFE1E5;white-space:pre;letter-spacing:0.785px;"><u style="text-underline-offset:2px">C</u>opy</div><div id="t51" style="position:absolute;left:1277.5px;top:171.5px;font-family:'Liberation Sans', sans-serif;font-size:16px;font-weight:400;line-height:30px;color:#6F737A;white-space:pre;letter-spacing:0.953px;">Ctrl+C</div><div id="t52" style="position:absolute;left:982.3px;top:203.5px;font-family:'Liberation Sans', sans-serif;font-size:16px;font-weight:400;line-height:30px;color:#DFE1E5;white-space:pre;letter-spacing:0.616px;"><u style="text-underline-offset:2px">P</u>aste</div><div id="t53" style="position:absolute;left:1278.5px;top:203.5px;font-family:'Liberation Sans', sans-serif;font-size:16px;font-weight:400;line-height:30px;color:#6F737A;white-space:pre;letter-spacing:0.932px;">Ctrl+V</div><div id="t54" style="position:absolute;left:982.3px;top:235.5px;font-family:'Liberation Sans', sans-serif;font-size:16px;font-weight:400;line-height:30px;color:#DFE1E5;white-space:pre;letter-spacing:0.563px;">Copy / Paste Special</div><div id="t55" style="position:absolute;left:982.3px;top:267.5px;font-family:'Liberation Sans', sans-serif;font-size:16px;font-weight:400;line-height:30px;color:#DFE1E5;white-space:pre;letter-spacing:0.649px;">Column Selection <u style="text-underline-offset:2px">M</u>ode</div><div id="t56" style="position:absolute;left:1205.5px;top:267.5px;font-family:'Liberation Sans', sans-serif;font-size:16px;font-weight:400;line-height:30px;color:#6F737A;white-space:pre;letter-spacing:0.882px;">Alt+Shift+Insert</div><div id="t57" style="position:absolute;left:982.3px;top:310.5px;font-family:'Liberation Sans', sans-serif;font-size:16px;font-weight:400;line-height:30px;color:#DFE1E5;white-space:pre;letter-spacing:0.558px;">Find in Files</div><div id="t58" style="position:absolute;left:1232.6px;top:310.5px;font-family:'Liberation Sans', sans-serif;font-size:16px;font-weight:400;line-height:30px;color:#6F737A;white-space:pre;letter-spacing:0.920px;">Ctrl+Shift+F</div><div id="t59" style="position:absolute;left:982.3px;top:342.5px;font-family:'Liberation Sans', sans-serif;font-size:16px;font-weight:400;line-height:30px;color:#DFE1E5;white-space:pre;letter-spacing:0.605px;">Find <u style="text-underline-offset:2px">U</u>sages</div><div id="t60" style="position:absolute;left:1241.8px;top:342.5px;font-family:'Liberation Sans', sans-serif;font-size:16px;font-weight:400;line-height:30px;color:#A8ADBD;white-space:pre;letter-spacing:0.811px;">Alt+Shift+7</div><div id="t61" style="position:absolute;left:982.3px;top:374.5px;font-family:'Liberation Sans', sans-serif;font-size:16px;font-weight:400;line-height:30px;color:#DFE1E5;white-space:pre;letter-spacing:0.859px;">Go To</div><div id="t62" style="position:absolute;left:982.3px;top:417.5px;font-family:'Liberation Sans', sans-serif;font-size:16px;font-weight:400;line-height:30px;color:#DFE1E5;white-space:pre;letter-spacing:0.859px;">Folding</div><div id="t63" style="position:absolute;left:982.3px;top:460.5px;font-family:'Liberation Sans', sans-serif;font-size:16px;font-weight:400;line-height:30px;color:#DFE1E5;white-space:pre;letter-spacing:0.720px;">Open Corresponding Android.bp File</div><div id="t64" style="position:absolute;left:982.3px;top:492.5px;font-family:'Liberation Sans', sans-serif;font-size:16px;font-weight:400;line-height:30px;color:#DFE1E5;white-space:pre;letter-spacing:0.385px;">Gemini</div><div id="t65" style="position:absolute;left:982.3px;top:524.5px;font-family:'Liberation Sans', sans-serif;font-size:16px;font-weight:400;line-height:30px;color:#DFE1E5;white-space:pre;letter-spacing:0.687px;"><u style="text-underline-offset:2px">S</u>earch with Google</div><div id="t66" style="position:absolute;left:982.3px;top:567.5px;font-family:'Liberation Sans', sans-serif;font-size:16px;font-weight:400;line-height:30px;color:#DFE1E5;white-space:pre;letter-spacing:0.130px;"><u style="text-underline-offset:2px">R</u>ename...</div><div id="t67" style="position:absolute;left:1262.6px;top:567.5px;font-family:'Liberation Sans', sans-serif;font-size:16px;font-weight:400;line-height:30px;color:#6F737A;white-space:pre;letter-spacing:0.796px;">Shift+F6</div><div id="t68" style="position:absolute;left:982.3px;top:599.5px;font-family:'Liberation Sans', sans-serif;font-size:16px;font-weight:400;line-height:30px;color:#DFE1E5;white-space:pre;letter-spacing:0.627px;"><u style="text-underline-offset:2px">R</u>efactor</div><div id="t69" style="position:absolute;left:982.3px;top:631.5px;font-family:'Liberation Sans', sans-serif;font-size:16px;font-weight:400;line-height:30px;color:#DFE1E5;white-space:pre;letter-spacing:0.378px;">Generate...</div><div id="t70" style="position:absolute;left:1253.2px;top:631.5px;font-family:'Liberation Sans', sans-serif;font-size:16px;font-weight:400;line-height:30px;color:#6F737A;white-space:pre;letter-spacing:0.777px;">Alt+Insert</div><div id="t71" style="position:absolute;left:982.3px;top:674.5px;font-family:'Liberation Sans', sans-serif;font-size:16px;font-weight:400;line-height:30px;color:#DFE1E5;white-space:pre;letter-spacing:0.438px;">Open In</div><div id="t72" style="position:absolute;left:982.3px;top:717.5px;font-family:'Liberation Sans', sans-serif;font-size:16px;font-weight:400;line-height:30px;color:#DFE1E5;white-space:pre;letter-spacing:0.731px;">Local <u style="text-underline-offset:2px">H</u>istory</div><div id="t73" style="position:absolute;left:982.3px;top:749.5px;font-family:'Liberation Sans', sans-serif;font-size:16px;font-weight:400;line-height:30px;color:#DFE1E5;white-space:pre;letter-spacing:0.516px;"><u style="text-underline-offset:2px">G</u>it</div></body></html>
